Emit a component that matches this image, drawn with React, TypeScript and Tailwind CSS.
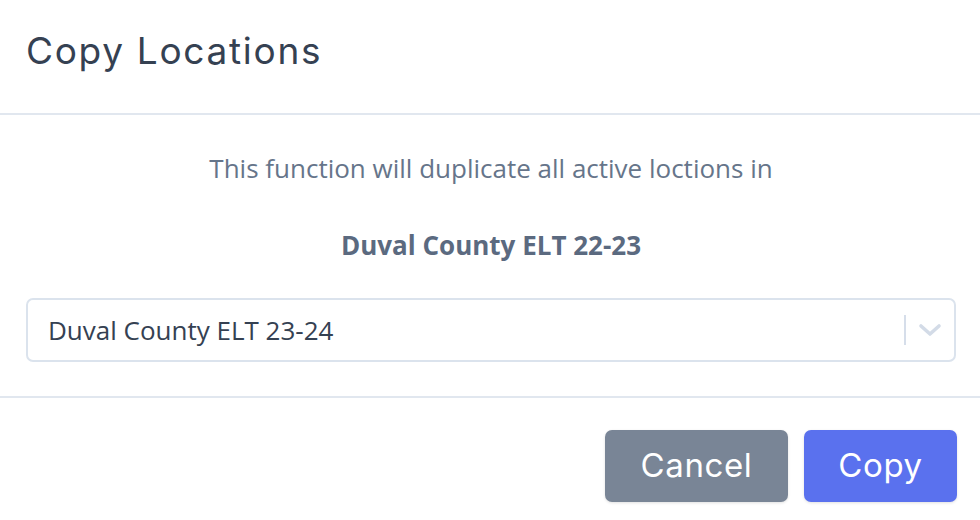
import React from "react";

const headingFont = { fontFamily: "Inter, 'Noto Sans', sans-serif" };

const CopyLocationsModal = () => {
  return (
    <div className="w-[980px] h-[520px] bg-white flex flex-col font-['Open_Sans',sans-serif]">
      <div className="h-[115px] px-[26px] flex items-center border-b-2 border-[#e1e7ef] shrink-0">
        <h1
          style={headingFont}
          className="text-[37px] leading-none text-[#354152] font-normal tracking-[1.7px] -mt-[12px]"
        >
          Copy Locations
        </h1>
      </div>
      <div className="flex-1 pl-[26px] pr-[24px] flex flex-col border-b-2 border-[#e1e7ef]">
        <p className="mt-[35px] text-center text-[26px] leading-[36px] text-[#66758a]">
          This function will duplicate all active loctions in
        </p>
        <p className="mt-[41px] text-center text-[26px] leading-[36px] font-bold text-[#5b6a80]">
          Duval County ELT 22-23
        </p>
        <div className="mt-[35px] h-[64px] rounded-[7px] border-2 border-[#dbe3ed] flex items-center pl-[20px] pr-[12px]">
          <span className="flex-1 text-[26px] text-[#354152]">
            Duval County ELT 23-24
          </span>
          <span className="w-[2px] h-[30px] bg-[#d6deea]" />
          <svg
            width="24"
            height="24"
            viewBox="0 0 24 24"
            className="ml-[12px]"
            fill="none"
            stroke="#d3dbe7"
            strokeWidth="3.6"
            strokeLinecap="round"
            strokeLinejoin="round"
          >
            <path d="M3 8l9 8 9-8" />
          </svg>
        </div>
      </div>
      <div className="h-[122px] px-[23px] flex items-start justify-end gap-[16px] pt-[32px] shrink-0">
        <button
          style={headingFont}
          className="w-[183px] h-[72px] rounded-[7px] bg-[#798596] text-white text-[33px] tracking-[0.6px] shadow-[0_1px_3px_rgba(0,0,0,0.12)]"
        >
          Cancel
        </button>
        <button
          style={headingFont}
          className="w-[153px] h-[72px] rounded-[7px] bg-[#5a71ee] text-white text-[33px] tracking-[0.6px] shadow-[0_1px_3px_rgba(0,0,0,0.12)]"
        >
          Copy
        </button>
      </div>
    </div>
  );
};

export default function App() {
  return <CopyLocationsModal />;
}
